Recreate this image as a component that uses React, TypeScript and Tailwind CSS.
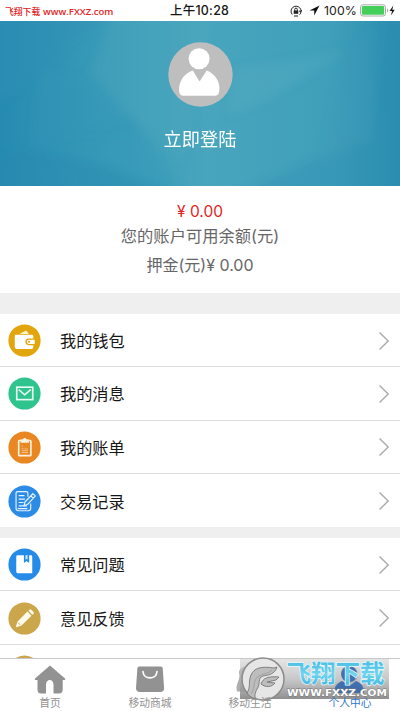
import React from "react";

type IconName = "wallet" | "mail" | "bill" | "record" | "book" | "pencil";

const glyphs: Record<IconName, React.ReactNode> = {
  wallet: (
    <>
      <path d="m12 10.200 5.500-2.900c1-.6 2-.2 2.500.6l1.300 2.300z" fill="#fff3cf" />
      <path d="M8 11.200h16.600a1.500 1.500 0 0 1 1.500 1.500v2.300h-4.800a3.400 3.400 0 0 0 0 6.800h4.800v2a2 2 0 0 1-2 2H9.200a2.200 2.200 0 0 1-2.200-2.200V12.200a1 1 0 0 1 1-1z" fill="#fff" />
      <path d="M21.500 16.200h6v4.400h-6a2.200 2.200 0 0 1 0-4.400z" fill="#fff" />
      <circle cx="21.600" cy="18.400" r="1.100" fill="#e2a60c" />
    </>
  ),
  mail: (
    <g fill="none" stroke="#e8fff5" strokeWidth="1.700">
      <rect x="9" y="10.500" width="16.500" height="12.800" />
      <path d="m11 13 6.200 5.300 6.200-5.300" />
    </g>
  ),
  bill: (
    <>
      <rect x="11" y="9.800" width="12.600" height="15.600" rx=".8" fill="none" stroke="#fff3df" strokeWidth="1.700" />
      <path d="M13 8.800h2.400c.2-2.200 3.600-2.200 3.800 0h2.400v3.200H13z" fill="#fff3df" />
      <path d="M14 15.500h1.500m1.500 3h3.500M14 18.300h2m-2 2h6.500M14 22.200h6.500" stroke="#f6c894" strokeWidth=".9" />
    </>
  ),
  record: (
    <g fill="none" stroke="#e4f3ff" strokeWidth="1.200" strokeLinejoin="round">
      <path d="M20.500 12V8.300a1.500 1.500 0 0 0-1.500-1.500H9.800A1.500 1.500 0 0 0 8.300 8.300V24a2.500 2.500 0 0 0 2.500 2.500H21a2.500 2.500 0 0 0 2.400-2.500v-5" />
      <path d="M11 11h6M11 14.500h6.500M11 18h5M11 21.500h8.500M10 24.300h10" />
      <path d="m25.600 9 2.600 2.200-7.900 8.700-3.800 1.500 1-3.900zM23.600 11.300l2.500 2.200" />
    </g>
  ),
  book: (
    <>
      <path d="M8.500 9a1.500 1.500 0 0 1 1.500-1.500h13.500A1.500 1.500 0 0 1 25 9v17H10A1.500 1.500 0 0 1 8.500 24.500z" fill="#fff" />
      <path d="M16.400 7h5.400v8.500l-2.700-2-2.700 2z" fill="#258be8" />
      <path d="M18 7.500h2.200V12l-1.100-.8L18 12z" fill="#cce8ff" />
    </>
  ),
  pencil: (
    <>
      <path d="m8 26 1.600-5.600L20 9.900l4.200 4.200-10.500 10.300z" fill="#fffbed" />
      <path d="m21 9 1-.9a1.400 1.400 0 0 1 2 0l2.200 2.200a1.400 1.400 0 0 1 0 2l-1 .9z" fill="#fffbed" />
      <path d="m10 21 3 3" stroke="#cca64a" strokeWidth=".8" />
    </>
  ),
};

function Row({ icon, color, label, last = false }: { icon: IconName; color: string; label: string; last?: boolean }) {
  return (
    <div className={`flex h-[53.300px] items-center bg-white pl-2 pr-[10px] pt-px ${last ? "" : "border-b border-[#dedede]"}`}>
      <svg viewBox="0 0 34 34" className="size-[33px] shrink-0">
        <circle cx="17" cy="17" r="16.600" fill={color} />
        {glyphs[icon]}
      </svg>
      <span className="ml-[19px] mt-px flex-1 text-[16.200px] leading-6 text-[#171717]">{label}</span>
      <svg viewBox="0 0 12 20" className="h-5 w-3 shrink-0" fill="none" stroke="#aaa" strokeWidth="1.400">
        <path d="m1.500 1.500 8.700 8.500-8.700 8.500" />
      </svg>
    </div>
  );
}

function Header() {
  return (
    <header className="relative h-[165px] shrink-0 overflow-hidden bg-[#3a9bb9]">
      <svg viewBox="0 0 400 165" className="absolute inset-0 size-full" preserveAspectRatio="none">
        <defs>
          <linearGradient id="sea">
            <stop offset="0" stopColor="#268bb2" />
            <stop offset=".1" stopColor="#2e91b4" />
            <stop offset=".28" stopColor="#3b9cb9" />
            <stop offset=".52" stopColor="#48a5bd" />
            <stop offset=".83" stopColor="#3f9fba" />
            <stop offset="1" stopColor="#2b8eb0" />
          </linearGradient>
          <filter id="soft"><feGaussianBlur stdDeviation="4" /></filter>
        </defs>
        <path d="M0 0h400v165H0z" fill="url(#sea)" />
        <g filter="url(#soft)">
          <path d="M-10-10h120L40 48-10 90z" fill="#2e8fb5" opacity=".4" />
          <path d="M113-10h100l-30 150-38-30-55-58z" fill="#50acc0" opacity=".22" />
          <path d="M40 48 90 60l54 50-112 10z" fill="#3794b6" opacity=".35" />
          <path d="M32 126 130 95l55 80H90z" fill="#3095b6" opacity=".3" />
          <path d="m-10 140 40-12 80 18 70 29H-10z" fill="#2487af" opacity=".35" />
          <path d="m235 48 110-17-75 47-42 16z" fill="#63b8c4" opacity=".22" />
          <path d="m345 36-22 95 50-10 17-131z" fill="#3796b6" opacity=".25" />
          <path d="M375-10h35v185H235l90-40 50-15z" fill="#258bb0" opacity=".32" />
        </g>
      </svg>
      <div className="relative flex h-full flex-col items-center pt-[21px]">
        <svg viewBox="0 0 64 64" className="size-[65px]">
          <circle cx="32" cy="32" r="31.700" fill="#bebebe" />
          <circle cx="30.600" cy="16.500" r="10.300" fill="#fff" />
          <path d="m24.400 28 6.700 11 7-11C46 31 51.500 39 50.600 47c-.2 3.500-1.300 5.800-4 5.800H15c-3 0-4.200-2.500-4.100-6C11 38 16 31 24.400 28z" fill="#fff" />
        </svg>
        <span className="mt-[18px] text-[18.200px] leading-7 text-white">立即登陆</span>
      </div>
    </header>
  );
}

function Watermark() {
  return (
    <div className="absolute left-[240px] top-[659px] h-10 w-[149px]">
      <svg viewBox="0 0 149 40" className="size-full overflow-visible">
        <defs>
          <linearGradient id="plate" x1="0" x2="0" y1="0" y2="1">
            <stop stopColor="#d2d2d2" stopOpacity=".6" />
            <stop offset=".5" stopColor="#b0b0b0" stopOpacity=".7" />
            <stop offset="1" stopColor="#828282" stopOpacity=".9" />
          </linearGradient>
          <linearGradient id="ice" x1="0" x2="0" y1="0" y2="1">
            <stop stopColor="#42b9e2" />
            <stop offset=".55" stopColor="#70d4ee" />
            <stop offset="1" stopColor="#36b2e0" />
          </linearGradient>
        </defs>
        <path d="M0 0h149v40H0z" fill="url(#plate)" />
        <g fill="#3567ae" opacity=".85">
          <circle cx="109" cy="15" r="8" />
          <path d="m102 22 7 5 7-5c5 2 8 6 8 12H94c0-6 3-10 8-12z" />
        </g>
        <circle cx="23" cy="20" r="21" fill="#e6e6e6" stroke="#8b8b8b" strokeWidth="1.500" />
        <path d="M7 34C11 28 8 23 11 16 14 9 21 7 34 9l3-1c-2 7-8 8-14 9-6 2-2 8-6 13-2 4-3 8-1 10-4-1-7-3-9-6zM21 25c2-6 7-8 18-7l-3 3-9 2 8 1c-3 4-9 5-14 1z" fill="#bdbdbd" stroke="#777" strokeWidth=".9" />
        <path d="M11 35c5-7 1-14 8-18 5-3 9-2 13-6" fill="none" stroke="#999" strokeWidth=".8" />
        <text x="46.500" y="22.500" textLength="98" lengthAdjust="spacingAndGlyphs" fontSize="24" fontWeight="700" fill="url(#ice)" stroke="#e5f7fb" strokeWidth="1.500" paintOrder="stroke">飞翔下载</text>
        <text x="47" y="36.500" textLength="100" lengthAdjust="spacingAndGlyphs" fontFamily="DejaVu Sans, sans-serif" fontSize="9.500" fontWeight="bold" fill="#fff" stroke="#777" strokeWidth=".8" paintOrder="stroke">WWW.FXXZ.COM</text>
      </svg>
    </div>
  );
}

function Tab({ label, active = false, children }: { label: string; active?: boolean; children: React.ReactNode }) {
  return (
    <div className={`flex w-[100px] flex-col items-center pt-[5px] ${active ? "text-[#2f78cf]" : "text-[#929292]"}`}>
      <svg viewBox="0 0 32 30" className="h-[31px] w-8" fill="currentColor">{children}</svg>
      <span className="relative z-10 mt-[2px] text-[10.800px] leading-[14px]">{label}</span>
    </div>
  );
}

export default function App() {
  return (
    <div className="relative flex h-[711px] w-[400px] flex-col overflow-hidden bg-white font-['Inter','Noto_Sans_CJK_SC',sans-serif]">
      <div className="flex h-[21px] shrink-0 items-center justify-between pl-[5px] pr-[5px]">
        <div className="flex w-[120px] items-center whitespace-nowrap text-[#df2526]">
          <span className="mt-[3px] w-[38px] text-[8.800px] font-medium leading-4">飞翔下载</span>
          <span className="mt-[3px] font-['Open_Sans',sans-serif] text-[9.500px] font-semibold leading-4">www.FXXZ.com</span>
        </div>
        <div className="ml-[27px] flex-1 whitespace-nowrap pl-[18px] pt-px text-[12.400px] font-medium leading-5 tracking-[.3px] text-[#161616]">上午10:28</div>
        <div className="flex items-center">
          <svg viewBox="0 0 12 12" className="mr-[7px] size-3" fill="none" stroke="#222" strokeWidth="1">
            <path d="M2.300 9.500A5 5 0 1 1 9.600 9.700M11.600 5l-.9 2-1.700-1.200M4 11h4" />
            <path d="M3.700 5.500h4.600v3.300H3.700z" fill="#222" stroke="none" />
            <path d="M4.700 6V4.400a1.300 1.300 0 0 1 2.600 0V6" />
          </svg>
          <svg viewBox="0 0 11 11" className="mr-[6px] size-[11px]" fill="#111"><path d="M10.500.5.500 5.600h4.700v4.900z" /></svg>
          <span className="w-[33px] whitespace-nowrap text-[12.300px] leading-5 tracking-[.1px] text-[#222] -ml-[2px] mr-px">100%</span>
          <svg viewBox="0 0 30 13" className="ml-[2px] h-[13px] w-[30px]">
            <rect x=".5" y=".8" width="25" height="11.200" rx="2.500" fill="#fff" stroke="#aaa" />
            <rect x="1.800" y="2.100" width="22.400" height="8.600" rx="1.300" fill="#43cf5a" />
            <path d="M27 4.500c1.600.6 1.600 3.400 0 4z" fill="#aaa" />
          </svg>
          <svg viewBox="0 0 6 11" className="-ml-[1px] h-[11px] w-[6px]" fill="#181818"><path d="M4.300.5.500 6H3l-1 4.500L5.700 4.700H3.300z" /></svg>
        </div>
      </div>
      <Header />
      <section className="flex h-[107px] shrink-0 flex-col items-center pt-[14px] text-[#666]">
        <div className="text-[15.500px] leading-6 text-[#e32224]">¥ 0.00</div>
        <div className="text-[16.300px] leading-6">您的账户可用余额(元)</div>
        <div className="mt-[5px] text-[16px] leading-6">押金(元)¥ 0.00</div>
      </section>
      <main className="h-[365px] shrink-0 overflow-hidden bg-[#efefef] pt-[21px]">
        <Row icon="wallet" color="#e2a60c" label="我的钱包" />
        <Row icon="mail" color="#2fc38d" label="我的消息" />
        <Row icon="bill" color="#e98722" label="我的账单" />
        <Row icon="record" color="#2c8be5" label="交易记录" last />
        <div className="h-[11px]" />
        <Row icon="book" color="#258be8" label="常见问题" />
        <Row icon="pencil" color="#cca64a" label="意见反馈" />
        <Row icon="pencil" color="#cca64a" label="" last />
      </main>
      <nav className="flex h-[53px] shrink-0 border-t border-[#c8c8c8] bg-white">
        <Tab label="首页">
          <path d="M16 1 1 14c-.8 1 .2 1.500 1 1.500h1.500V25c0 2.700 1 4 3.500 4h5V20c0-6 7.500-6 7.500 0v9H25c2.500 0 3.700-1.300 3.700-4v-9.500h1.500c.8 0 1.600-.6.800-1.500z" />
        </Tab>
        <Tab label="移动商城">
          <path d="M5 2h22a2 2 0 0 1 1.700 1.500l1.400 20c.2 2.500-1.500 4-3.700 4H5.800c-2.500 0-4-1.700-3.800-4L3.400 3.500A2 2 0 0 1 5 2z" />
          <path d="M9 7c.5 8.500 13.500 8.500 14 0" fill="none" stroke="#fff" strokeWidth="1.700" strokeLinecap="round" />
        </Tab>
        <Tab label="移动生活">
          <path d="M5 8c0-5 8-8 13-5 8-2 12 7 9 13-2 5-7 5-8 11H3c-2-8 4-11 2-19z" opacity=".75" />
        </Tab>
        <Tab label="个人中心" active>
          <circle cx="16" cy="10" r="8" />
          <path d="M9 17 16 22l7-5c5 2 7 5 7 11H2c0-6 2-9 7-11z" />
        </Tab>
      </nav>
      <Watermark />
    </div>
  );
}
